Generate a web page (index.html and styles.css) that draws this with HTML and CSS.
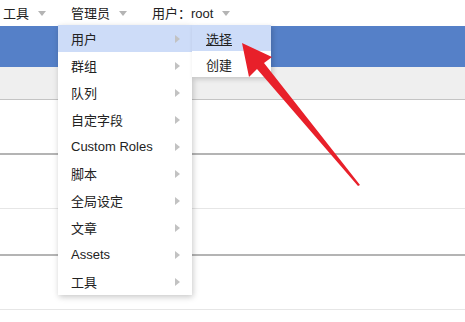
FILE: index.html
```html
<!DOCTYPE html>
<html lang="zh-CN">
<head>
    <meta charset="UTF-8">
    <meta name="viewport" content="width=device-width, initial-scale=1.0">
    <title>管理员</title>
    <link rel="stylesheet" href="styles.css">
</head>
<body>
    <div class="nav">
        <div class="nav-item">工具<span class="caret"></span></div>
        <div class="nav-item">管理员<span class="caret"></span></div>
        <div class="nav-item">用户：root<span class="caret"></span></div>
    </div>

    <div class="page">
        <div class="bar-blue"></div>
        <div class="bar-grey"></div>
        <div class="row thick"></div>
        <div class="row thin"></div>
        <div class="row thick short"></div>
        <div class="row thin"></div>
    </div>

    <ul class="menu">
        <li class="active">用户<span class="arrow"></span></li>
        <li>群组<span class="arrow"></span></li>
        <li>队列<span class="arrow"></span></li>
        <li>自定字段<span class="arrow"></span></li>
        <li>Custom Roles<span class="arrow"></span></li>
        <li>脚本<span class="arrow"></span></li>
        <li>全局设定<span class="arrow"></span></li>
        <li>文章<span class="arrow"></span></li>
        <li>Assets<span class="arrow"></span></li>
        <li>工具<span class="arrow"></span></li>
    </ul>

    <ul class="submenu">
        <li class="active"><u>选择</u></li>
        <li>创建</li>
    </ul>

    <svg class="pointer" width="465" height="322" viewBox="0 0 465 322">
        <polygon points="242,43 272,57 264,63 360,185 358,186 257,69 249,77" fill="#e8202a"/>
    </svg>
</body>
</html>
```

FILE: styles.css
```css
* {
    margin: 0;
    padding: 0;
    box-sizing: border-box;
}
body {
    width: 465px;
    height: 322px;
    overflow: hidden;
    background: #fff;
    color: #222;
    font-family: "Liberation Sans", "Noto Sans CJK SC", sans-serif;
    font-size: 13px;
    position: relative;
}
.nav {
    height: 25px;
    display: flex;
    align-items: center;
    gap: 25px;
    padding-left: 3px;
    padding-bottom: 1px;
}
.nav-item {
    display: flex;
    align-items: center;
}
.caret {
    width: 0;
    height: 0;
    margin-left: 9px;
    margin-top: 2px;
    border-left: 4px solid transparent;
    border-right: 4px solid transparent;
    border-top: 5px solid #b4b4b4;
}
.page {
    display: flex;
    flex-direction: column;
}
.bar-blue {
    margin-top: 1px;
    height: 41px;
    background: #5580c8;
}
.bar-grey {
    height: 33px;
    background: #efefef;
    border-bottom: 1px solid #c4c4c4;
}
.row {
    height: 55px;
}
.row.thick {
    border-bottom: 2px solid #b4b4b4;
}
.row.thin {
    height: 54px;
    border-bottom: 1px solid #e6e6e6;
}
.row.short {
    height: 47px;
}
.menu, .submenu {
    list-style: none;
    position: absolute;
    top: 25px;
    background: #fff;
    box-shadow: 1px 2px 6px rgba(0, 0, 0, 0.22);
}
.menu {
    left: 58px;
    width: 134px;
}
.submenu {
    left: 192px;
    width: 79px;
    box-shadow: 2px 2px 5px rgba(0, 0, 0, 0.18);
}
.menu li, .submenu li {
    height: 27px;
    display: flex;
    align-items: center;
    justify-content: space-between;
    padding-left: 13px;
    padding-right: 12px;
}
.submenu li {
    height: 26px;
    padding-left: 14px;
}
.menu li.active, .submenu li.active {
    background: #cddcf8;
}
.arrow {
    width: 0;
    height: 0;
    border-top: 4px solid transparent;
    border-bottom: 4px solid transparent;
    border-left: 5px solid #c2c2c2;
}
.pointer {
    position: absolute;
    left: 0;
    top: 0;
}
```
